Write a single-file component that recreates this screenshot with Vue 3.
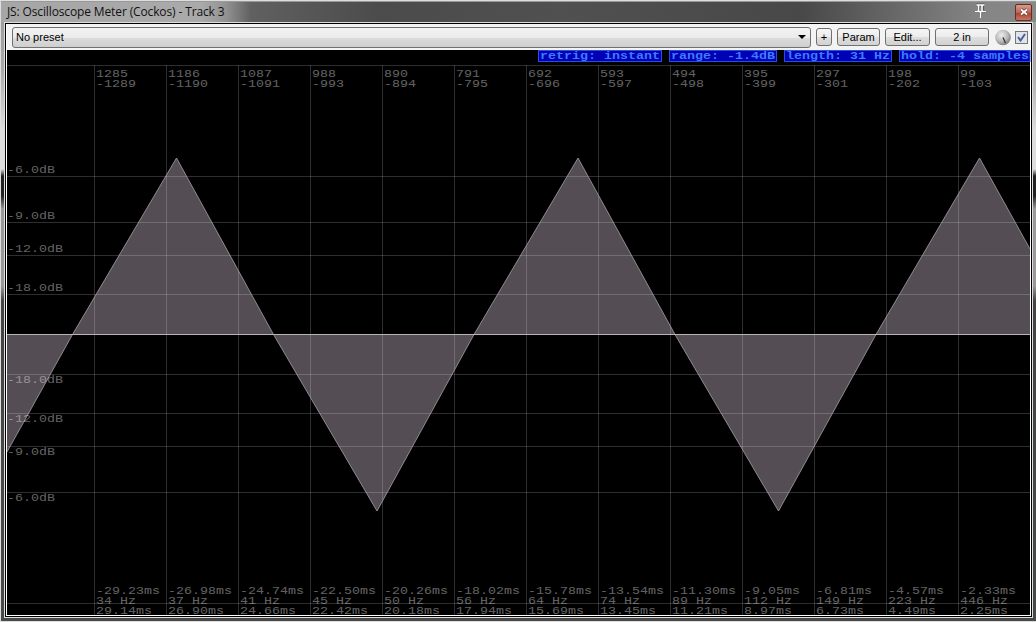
<template>
  <div class="window">
    <header class="title-bar">
      <span class="title">JS: Oscilloscope Meter (Cockos) - Track 3</span>
      <svg class="pin" width="14" height="16" viewBox="0 0 14 16">
        <path class="pin-edge" d="M3.5 1h8M5.5 1v6M9.5 1v6M2 7.5h11M7.5 8v6" />
        <path d="M3.5 1h8M5.5 1v6M9 1v6M2 7.5h11M7.5 8v6" />
      </svg>
      <button class="close" title="Close">
        <svg width="8" height="8" viewBox="0 0 8 8">
          <path class="close-edge" d="M1 1.5l6 5M7 1.5l-6 5" />
          <path class="close-cross" d="M1 1.5l6 5M7 1.5l-6 5" />
        </svg>
      </button>
    </header>

    <main class="client">
      <!-- Preset toolbar -->
      <div class="toolbar">
        <div class="preset">
          <span>No preset</span>
          <i class="arrow"></i>
        </div>
        <button class="btn btn-add">+</button>
        <button class="btn btn-param">Param</button>
        <button class="btn btn-edit">Edit...</button>
        <button class="btn btn-in">2 in</button>
        <svg class="knob" width="16" height="17" viewBox="0 0 16 17">
          <defs>
            <radialGradient id="knob-face" cx="40%" cy="35%" r="70%">
              <stop offset="0" stop-color="#ececec" />
              <stop offset="0.55" stop-color="#bdbdbd" />
              <stop offset="1" stop-color="#777" />
            </radialGradient>
          </defs>
          <circle cx="8" cy="8.5" r="7.8" fill="url(#knob-face)" />
          <path d="M8 8.5l2.5 5.5" stroke="#333" stroke-width="1.3" />
        </svg>
        <div class="check">
          <svg width="9" height="9" viewBox="0 0 9 9">
            <path d="M1 4l2.5 3.5L8 1" />
          </svg>
        </div>
      </div>

      <!-- Scope display -->
      <svg class="scope" width="1023" height="565" viewBox="7 50 1023 565">
        <rect class="screen" x="7" y="50" width="1023" height="565" />
        <polygon class="wave-fill" :points="fillPoints" />
        <g class="grid">
          <rect v-for="c in columns" :key="c.x" :x="c.x" y="65" width="1" height="550" />
          <rect v-for="y in rows" :key="y" x="7" :y="y" width="1023" height="1" />
        </g>
        <polyline class="wave-line" :points="wavePoints" />
        <rect class="zero" x="7" y="334" width="1023" height="1" />

        <g class="labels">
          <text v-for="l in levels" :key="l.y" :transform="place(7, l.y)">{{ l.text }}</text>
          <g v-for="c in columns" :key="c.x">
            <text
              v-for="(line, i) in c.lines"
              :key="i"
              :transform="place(c.x + 2, lineY[i])"
            >{{ line }}</text>
          </g>
        </g>

        <g v-for="o in options" :key="o.text" class="option">
          <rect :x="o.x + 0.5" y="50.5" :width="o.w" height="11" />
          <text :transform="place(o.x + 2, 59)">{{ o.text }}</text>
        </g>
      </svg>
    </main>
  </div>
</template>

<script setup>
const samples = [
  ['1285', '-1289', '-29.23ms', '34 Hz', '29.14ms'],
  ['1186', '-1190', '-26.98ms', '37 Hz', '26.90ms'],
  ['1087', '-1091', '-24.74ms', '41 Hz', '24.66ms'],
  ['988', '-993', '-22.50ms', '45 Hz', '22.42ms'],
  ['890', '-894', '-20.26ms', '50 Hz', '20.18ms'],
  ['791', '-795', '-18.02ms', '56 Hz', '17.94ms'],
  ['692', '-696', '-15.78ms', '64 Hz', '15.69ms'],
  ['593', '-597', '-13.54ms', '74 Hz', '13.45ms'],
  ['494', '-498', '-11.30ms', '89 Hz', '11.21ms'],
  ['395', '-399', '-9.05ms', '112 Hz', '8.97ms'],
  ['297', '-301', '-6.81ms', '149 Hz', '6.73ms'],
  ['198', '-202', '-4.57ms', '223 Hz', '4.49ms'],
  ['99', '-103', '-2.33ms', '446 Hz', '2.25ms']
]

const columns = samples.map((lines, i) => ({ x: 94 + i * 72, lines }))
const lineY = [77, 87, 594, 604, 614]
const rows = [65, 176, 222, 255, 294, 374, 413, 446, 492, 603]

const levels = [
  { y: 173, text: '-6.0dB' },
  { y: 219, text: '-9.0dB' },
  { y: 252, text: '-12.0dB' },
  { y: 291, text: '-18.0dB' },
  { y: 383, text: '-18.0dB' },
  { y: 422, text: '-12.0dB' },
  { y: 455, text: '-9.0dB' },
  { y: 501, text: '-6.0dB' }
]

const options = [
  { x: 538, w: 123, text: 'retrig: instant' },
  { x: 669, w: 107, text: 'range: -1.4dB' },
  { x: 784, w: 107, text: 'length: 31 Hz' },
  { x: 899, w: 130.5, text: 'hold: -4 samples' }
]

// peaks, zero crossings and troughs of the triangle
const wavePoints = '7,452 72.5,334.5 176.5,158 273.5,334.5 377,511 474,334.5 578,158 675,334.5 778.5,511 876,334.5 979.5,158 1030,249'
const fillPoints = `7,334.5 ${wavePoints} 1030,334.5`

// stretch a 10px mono face to the 8px wide character cell
const place = (x, y) => `translate(${x} ${y}) scale(1.333 1.06)`
</script>

<style>
body {
  margin: 0;
  overflow: hidden;
}
</style>

<style scoped>
.window {
  box-sizing: border-box;
  width: 1036px;
  height: 622px;
  padding: 1px 3px 4px 4px;
  border: 1px solid #ddd;
  border-width: 1px 0 1px 1px;
  background: linear-gradient(#999 0, #aaa 70px, #ddd 130px, #ddd 168px, #222 175px, #222 195px, #999 208px, #999 285px, #444 300px, #474a49 622px);
  font-family: "Liberation Sans", Arial, sans-serif;
}

.title-bar {
  display: flex;
  align-items: center;
  height: 20px;
  margin: 0 -3px 0 -4px;
  padding: 0 4px 0 6px;
  background: linear-gradient(90deg, #a6a6a6, #aaa 200px, #929292 225px, #606060 250px, #4b4b4b 380px, #505050 560px, #484848 800px, #858585 980px, #888);
}

.title {
  margin-top: -2px;
  font-family: "Open Sans", "Noto Sans", sans-serif;
  font-size: 12px;
  letter-spacing: -0.13px;
  color: #111;
}

.pin {
  margin-left: auto;
  margin-right: 28px;
  overflow: visible;
  fill: none;
  stroke: #fff;
  stroke-width: 1.6;
}

.pin-edge {
  stroke: #555;
  stroke-width: 3;
}

.close {
  display: flex;
  align-items: center;
  justify-content: center;
  width: 17px;
  height: 17px;
  padding: 0;
  border: 1px solid #612d26;
  border-radius: 2px;
  background: linear-gradient(#d99b8e, #bf6253 50%, #a7402f 51%, #c67563);
}

.close path {
  fill: none;
}

.close-edge {
  stroke: #5d3834;
  stroke-width: 3;
}

.close-cross {
  stroke: #fff;
  stroke-width: 1.8;
}

.client {
  box-sizing: border-box;
  width: 1027px;
  height: 594px;
  margin-top: 1px;
  padding: 0 1px 1px;
  border: 1px solid #000;
  outline: 1px solid #ddd;
  background: #fff;
}

.toolbar {
  display: flex;
  align-items: center;
  box-sizing: border-box;
  height: 26px;
  padding: 0 0 0 5px;
  background: #f3f3f3;
}

.preset {
  display: flex;
  align-items: center;
  justify-content: space-between;
  box-sizing: border-box;
  width: 799px;
  height: 21px;
  padding: 0 4px 0 3px;
  border: 1px solid #707070;
  border-radius: 3px;
  background: linear-gradient(#f3f3f3, #ebebeb 50%, #dcdcdc 51%, #cfcfcf);
  font-size: 11px;
  color: #000;
}

.arrow {
  border: 4px solid transparent;
  border-top-color: #000;
  border-bottom: 0;
}

.btn {
  flex-shrink: 0;
  box-sizing: border-box;
  height: 18px;
  margin-left: 5px;
  padding: 0;
  border: 1px solid #707070;
  border-radius: 3px;
  background: linear-gradient(#f5f5f5, #ececec 50%, #dedede 51%, #d2d2d2);
  font: 11px "Liberation Sans", Arial, sans-serif;
  color: #000;
}

.btn-add {
  width: 16px;
}

.btn-param {
  width: 43px;
}

.btn-edit {
  width: 45px;
}

.btn-in {
  width: 54px;
}

.knob {
  flex-shrink: 0;
  margin-left: 6px;
}

.check {
  display: flex;
  flex-shrink: 0;
  align-items: center;
  justify-content: center;
  box-sizing: border-box;
  width: 13px;
  height: 13px;
  margin-left: 4px;
  border: 1px solid #777;
  background: #dfe4ea;
}

.check path {
  fill: none;
  stroke: #4b5f97;
  stroke-width: 2;
}

.scope {
  display: block;
  overflow: visible;
  font-family: "Liberation Mono", monospace;
  font-size: 10px;
}

.screen {
  fill: #000;
}

.wave-fill {
  fill: #544d54;
}

.wave-line {
  fill: none;
  stroke: #aaa2aa;
  stroke-width: 0.8;
}

.grid {
  fill: rgba(255, 255, 255, 0.18);
}

.zero {
  fill: #b8b4b8;
}

.labels {
  fill: rgba(255, 255, 255, 0.4);
}

.option rect {
  fill: #0000b4;
  stroke: #2450e0;
}

.option text {
  fill: #3f7bff;
  font-weight: bold;
}
</style>
